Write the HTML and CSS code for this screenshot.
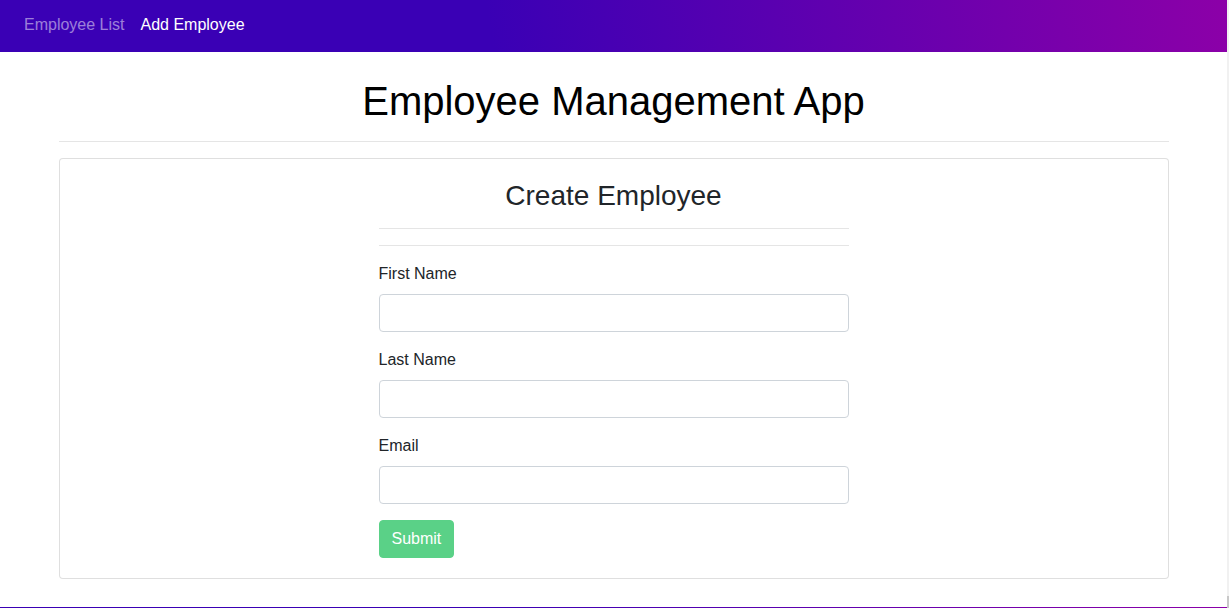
FILE: index.html
```html
<!DOCTYPE html>
<html lang="en">
<head>
<meta charset="utf-8">
<title>Employee Management App</title>
<link rel="stylesheet" href="styles.css">
</head>
<body>
<div class="page">
  <nav class="navbar">
    <a class="nav-link muted" href="#">Employee List</a>
    <a class="nav-link active" href="#">Add Employee</a>
  </nav>
  <main class="container">
    <h1 class="app-title">Employee Management App</h1>
    <hr class="rule">
    <section class="card">
      <div class="card-body">
        <div class="form-col">
          <h3 class="card-title">Create Employee</h3>
          <hr class="rule">
          <hr class="rule">
          <form class="form">
            <div class="form-group">
              <label class="label" for="fn">First Name</label>
              <input class="input" id="fn" type="text">
            </div>
            <div class="form-group">
              <label class="label" for="ln">Last Name</label>
              <input class="input" id="ln" type="text">
            </div>
            <div class="form-group">
              <label class="label" for="em">Email</label>
              <input class="input" id="em" type="email">
            </div>
            <button class="btn-submit" type="button">Submit</button>
          </form>
        </div>
      </div>
    </section>
  </main>
  <footer class="footer"></footer>
</div>
<div class="scrollbar"><div class="scroll-thumb"></div></div>
</body>
</html>
```

FILE: styles.css
```css
* {
  box-sizing: border-box;
}

html {
  overflow: hidden;
}

body {
  margin: 0;
  font-family: "Liberation Sans", Arial, sans-serif;
  font-size: 16px;
  line-height: 1.5;
  color: #212529;
  background: #fff;
}

.page {
  margin-right: 2px;
}

.scrollbar {
  position: fixed;
  top: 0;
  right: 0;
  bottom: 0;
  width: 2px;
  background: #f1f1f1;
  display: flex;
  flex-direction: column;
  justify-content: flex-end;
}

.scroll-thumb {
  height: 12px;
  background: #c8c8c8;
}

.navbar {
  display: flex;
  align-items: center;
  height: 52px;
  padding: 0 16px 2px;
  background-image: linear-gradient(80deg, #3a00b5 40%, #8c00a8 100%);
}

.nav-link {
  padding: 8px 8px;
  text-decoration: none;
  font-size: 16px;
}

.nav-link.muted {
  color: rgba(255, 255, 255, 0.5);
}

.nav-link.active {
  color: #fff;
}

.container {
  width: 1140px;
  margin: 0 auto;
  padding: 0 15px;
}

.app-title {
  margin: 25px 0 8px;
  font-size: 40px;
  font-weight: 400;
  line-height: 1.2;
  text-align: center;
  color: #000;
}

.rule {
  margin: 16px 0;
  border: 0;
  border-top: 1px solid rgba(0, 0, 0, 0.1);
  height: 0;
}

.card {
  border: 1px solid rgba(0, 0, 0, 0.125);
  border-radius: 4px;
  background: #fff;
}

.card-body {
  padding: 20px;
}

.form-col {
  width: 470px;
  margin: 0 auto;
}

.card-title {
  margin: 0 0 8px;
  font-size: 28px;
  font-weight: 400;
  line-height: 33px;
  text-align: center;
  color: #212529;
}

.form-group {
  margin-bottom: 16px;
}

.label {
  display: block;
  margin-bottom: 8px;
  font-size: 16px;
  line-height: 24px;
}

.input {
  display: block;
  width: 100%;
  height: 38px;
  padding: 6px 12px;
  font-family: inherit;
  font-size: 16px;
  border: 1px solid #ced4da;
  border-radius: 4px;
  background: #fff;
}

.btn-submit {
  display: block;
  height: 38px;
  padding: 6px 12px;
  font-family: inherit;
  font-size: 16px;
  line-height: 24px;
  color: #fff;
  background: #5ad187;
  border: 1px solid #5ad187;
  border-radius: 4px;
}

.footer {
  margin-top: 28px;
  height: 60px;
  background-image: linear-gradient(80deg, #3a00b5 40%, #8c00a8 100%);
}
```
